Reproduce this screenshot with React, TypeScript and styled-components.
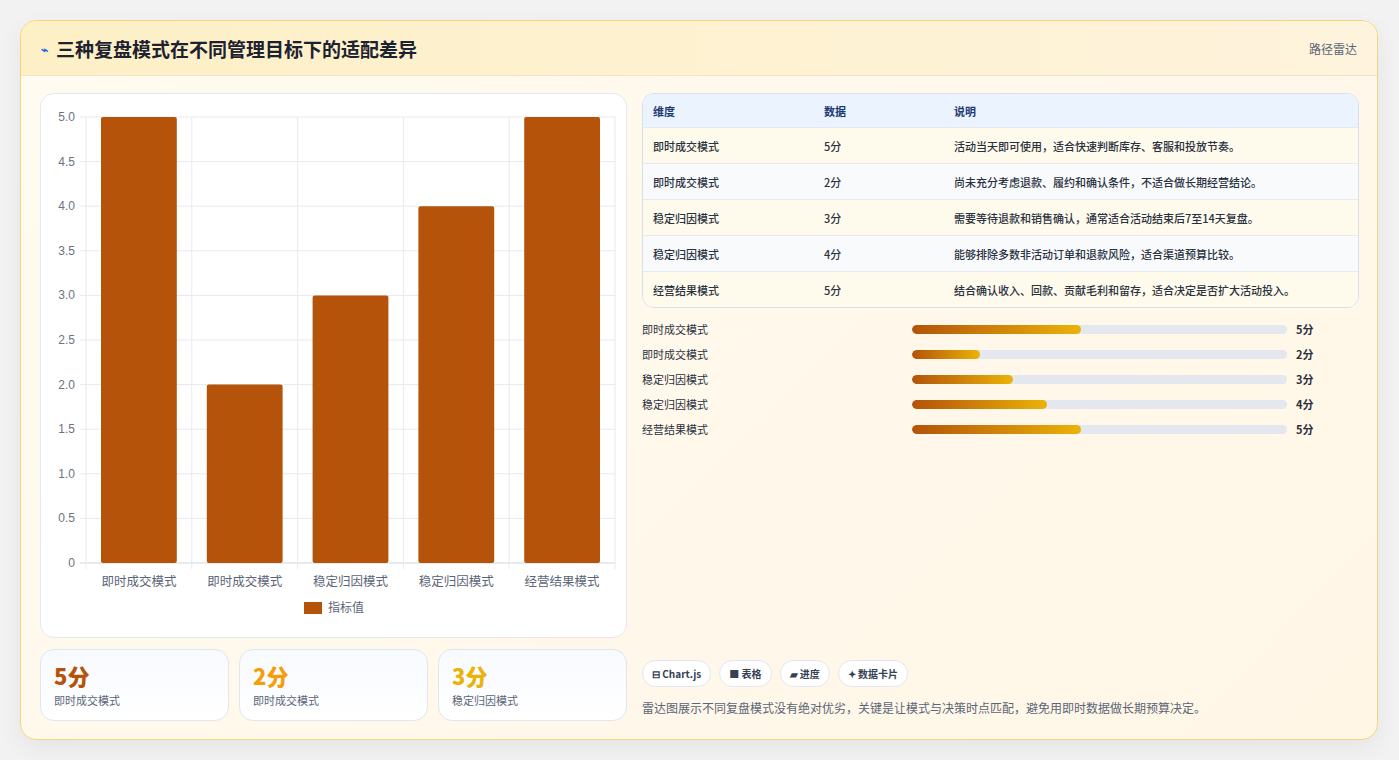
import React from 'react';
import styled, { createGlobalStyle } from 'styled-components';

const Global = createGlobalStyle`
  body {
    margin: 0;
    background: #f2f2f2;
    font-family: "Noto Sans CJK SC", "Noto Sans", sans-serif;
  }
`;

const Page = styled.div`
  padding: 20px 21px 20px 20px;
`;

const Panel = styled.div`
  height: 718px;
  border: 1px solid #f3d57e;
  border-radius: 16px;
  background: linear-gradient(135deg, #fffbf0, #fff6e6);
  box-shadow: 0 8px 24px rgba(0, 0, 0, 0.06);
  display: flex;
  flex-direction: column;
  overflow: hidden;
`;

const Header = styled.div`
  height: 54px;
  flex-shrink: 0;
  display: flex;
  align-items: center;
  justify-content: space-between;
  padding: 0 20px;
  background: linear-gradient(90deg, #fdf0c6, #fef3dc);
  border-bottom: 1px solid #f1e4c4;
`;

const Title = styled.h1`
  margin: 0;
  font-size: 19px;
  font-weight: 700;
  color: #1c2230;
  display: flex;
  align-items: center;
  gap: 8px;
`;

const Tag = styled.span`
  font-size: 12px;
  color: #5b6577;
`;

const Body = styled.div`
  flex: 1;
  display: grid;
  grid-template-columns: 587px 1fr;
  gap: 15px;
  padding: 17px 18px 18px 19px;
`;

const Column = styled.div`
  display: flex;
  flex-direction: column;
  gap: 11px;
  min-height: 0;
`;

const ChartCard = styled.div`
  height: 543px;
  background: #fff;
  border: 1px solid #e5e8ee;
  border-radius: 14px;
`;

const Stats = styled.div`
  display: grid;
  grid-template-columns: repeat(3, 1fr);
  gap: 10px;
`;

const StatCard = styled.div`
  height: 72px;
  box-sizing: border-box;
  border: 1px solid #dfe6f0;
  border-radius: 14px;
  background: linear-gradient(180deg, #f7faff, #ffffff);
  padding: 10px 13px;
`;

const StatValue = styled.div<{ $c: string }>`
  font-size: 22px;
  font-weight: 800;
  line-height: 30px;
  color: ${(p) => p.$c};
`;

const StatLabel = styled.div`
  font-size: 11px;
  color: #5b6577;
  margin-top: 2px;
`;

const Table = styled.div`
  border: 1px solid #d8dfea;
  border-radius: 12px;
  overflow: hidden;
  background: #fff;
`;

const Row = styled.div<{ $bg: string; $head?: boolean }>`
  display: grid;
  grid-template-columns: 171px 130px 1fr;
  height: ${(p) => (p.$head ? 33 : 35)}px;
  align-items: center;
  padding-left: 10px;
  background: ${(p) => p.$bg};
  border-top: ${(p) => (p.$head ? 'none' : '1px solid #e6e9ef')};
  font-size: 11px;
  font-weight: ${(p) => (p.$head ? 700 : 500)};
  color: ${(p) => (p.$head ? '#1e3a72' : '#2a3140')};
`;

const Bars = styled.div`
  display: flex;
  flex-direction: column;
  gap: 7px;
  margin-top: 12px;
`;

const BarRow = styled.div`
  display: grid;
  grid-template-columns: 270px 375px 1fr;
  align-items: center;
  gap: 0;
  height: 18px;
  font-size: 11px;
  color: #2a3140;
`;

const Track = styled.div`
  height: 9px;
  border-radius: 5px;
  background: #e3e8ef;
  overflow: hidden;
`;

const Fill = styled.div`
  height: 100%;
  border-radius: 5px;
  background: linear-gradient(90deg, #b45309, #eab308);
`;

const BarValue = styled.span`
  font-weight: 700;
  padding-left: 9px;
`;

const Spacer = styled.div`
  flex: 1;
`;

const Chips = styled.div`
  display: flex;
  gap: 8px;
`;

const Chip = styled.span`
  height: 27px;
  box-sizing: border-box;
  padding: 0 9px;
  border: 1px solid #e2e6ee;
  border-radius: 14px;
  background: #fff;
  display: flex;
  align-items: center;
  font-size: 10px;
  font-weight: 700;
  color: #334155;
`;

const Note = styled.p`
  margin: 12px 0 5px;
  font-size: 12px;
  color: #5b6577;
`;

const cats = ['即时成交模式', '即时成交模式', '稳定归因模式', '稳定归因模式', '经营结果模式'];
const vals = [5, 2, 3, 4, 5];
const desc = [
  '活动当天即可使用，适合快速判断库存、客服和投放节奏。',
  '尚未充分考虑退款、履约和确认条件，不适合做长期经营结论。',
  '需要等待退款和销售确认，通常适合活动结束后7至14天复盘。',
  '能够排除多数非活动订单和退款风险，适合渠道预算比较。',
  '结合确认收入、回款、贡献毛利和留存，适合决定是否扩大活动投入。',
];

function Chart() {
  const L = 45, R = 574, T = 23, B = 469;
  const step = (R - L) / 5;
  const y = (v: number) => B - (v / 5) * (B - T);
  const ticks = [0, 0.5, 1, 1.5, 2, 2.5, 3, 3.5, 4, 4.5, 5];
  return (
    <svg width="587" height="543" style={{ display: 'block' }}>
      {ticks.map((t) => (
        <g key={t}>
          <line x1={L - 6} x2={R} y1={y(t)} y2={y(t)} stroke={t === 0 ? '#cfd5de' : '#e6e9ee'} />
          <text x={L - 11} y={y(t) + 4} textAnchor="end" fontSize="12" fill="#6b7280" fontFamily="Liberation Sans, sans-serif">
            {t === 0 ? '0' : t.toFixed(1)}
          </text>
        </g>
      ))}
      {[0, 1, 2, 3, 4, 5].map((i) => (
        <line key={i} x1={L + i * step} x2={L + i * step} y1={T} y2={B + 6} stroke="#e6e9ee" />
      ))}
      {vals.map((v, i) => (
        <rect key={i} x={L + i * step + 15} y={y(v)} width={step - 30} height={B - y(v)} fill="#b45309" rx="2" />
      ))}
      {cats.map((c, i) => (
        <text key={i} x={L + i * step + step / 2} y={B + 23} textAnchor="middle" fontSize="12.5" fill="#5b6577">
          {c}
        </text>
      ))}
      <rect x="263" y="508" width="18" height="12" fill="#b45309" />
      <text x="287" y="518" fontSize="12" fill="#5b6577">指标值</text>
    </svg>
  );
}

export default function App() {
  return (
    <Page>
      <Global />
      <Panel>
        <Header>
          <Title>
            <span style={{ color: '#2563eb', fontSize: 12 }}>⌁</span>三种复盘模式在不同管理目标下的适配差异
          </Title>
          <Tag>路径雷达</Tag>
        </Header>
        <Body>
          <Column>
            <ChartCard>
              <Chart />
            </ChartCard>
            <Stats>
              <StatCard>
                <StatValue $c="#b45309">5分</StatValue>
                <StatLabel>即时成交模式</StatLabel>
              </StatCard>
              <StatCard>
                <StatValue $c="#f59e0b">2分</StatValue>
                <StatLabel>即时成交模式</StatLabel>
              </StatCard>
              <StatCard>
                <StatValue $c="#eab308">3分</StatValue>
                <StatLabel>稳定归因模式</StatLabel>
              </StatCard>
            </Stats>
          </Column>
          <Column style={{ gap: 0 }}>
            <Table>
              <Row $head $bg="#eaf3fe">
                <span>维度</span>
                <span>数据</span>
                <span>说明</span>
              </Row>
              {vals.map((v, i) => (
                <Row key={i} $bg={i % 2 === 0 ? '#fefaec' : '#f8fafc'}>
                  <span>{cats[i]}</span>
                  <span>{v}分</span>
                  <span>{desc[i]}</span>
                </Row>
              ))}
            </Table>
            <Bars>
              {vals.map((v, i) => (
                <BarRow key={i}>
                  <span>{cats[i]}</span>
                  <Track>
                    <Fill style={{ width: `${v * 9}%` }} />
                  </Track>
                  <BarValue>{v}分</BarValue>
                </BarRow>
              ))}
            </Bars>
            <Spacer />
            <Chips>
              <Chip>⊟ Chart.js</Chip>
              <Chip>■ 表格</Chip>
              <Chip>▰ 进度</Chip>
              <Chip>✦ 数据卡片</Chip>
            </Chips>
            <Note>雷达图展示不同复盘模式没有绝对优劣，关键是让模式与决策时点匹配，避免用即时数据做长期预算决定。</Note>
          </Column>
        </Body>
      </Panel>
    </Page>
  );
}
